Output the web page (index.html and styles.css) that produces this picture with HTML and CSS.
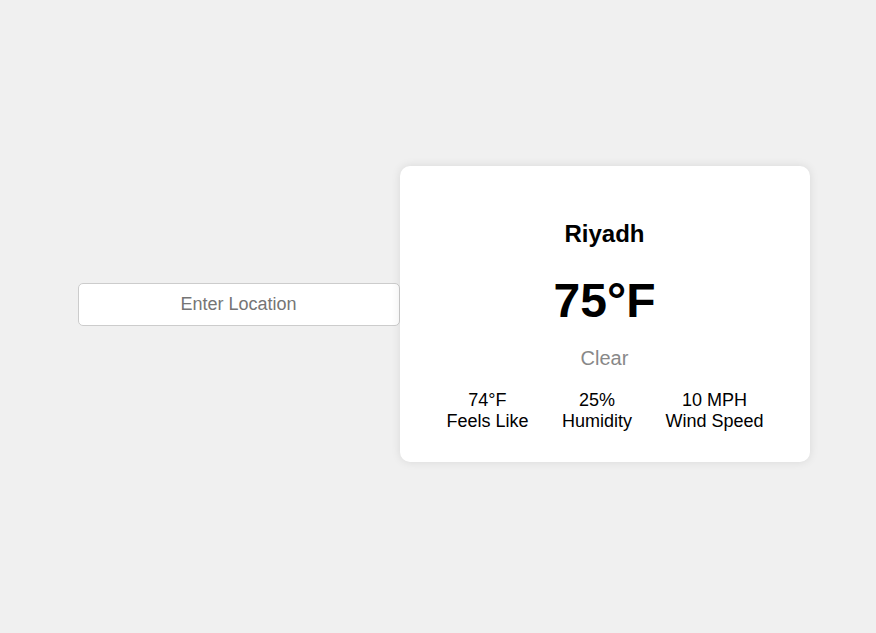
FILE: index.html
```html
<!DOCTYPE html>
<html lang="en">
<head>
<meta charset="utf-8">
<title>Weather</title>
<link rel="stylesheet" href="styles.css">
</head>
<body>
<div class="page">
  <div class="search">
    <input class="location" type="text" placeholder="Enter Location">
  </div>
  <div class="card">
    <h2 class="city">Riyadh</h2>
    <div class="temp">75°F</div>
    <div class="desc">Clear</div>
    <div class="details">
      <div class="item"><div>74°F</div><div>Feels Like</div></div>
      <div class="item"><div>25%</div><div>Humidity</div></div>
      <div class="item"><div>10 MPH</div><div>Wind Speed</div></div>
    </div>
  </div>
</div>
</body>
</html>
```
FILE: styles.css
```css
* { box-sizing: border-box; }
html, body { margin: 0; padding: 0; }
body {
  background: #f0f0f0;
  font-family: "Liberation Sans", Arial, sans-serif;
  color: #000;
}
.page {
  height: 627px;
  padding-left: 11px;
  display: flex;
  justify-content: center;
  align-items: center;
}
.search {
  margin-bottom: 19px;
}
.location {
  display: block;
  width: 322px;
  height: 43px;
  padding: 10px;
  font-family: "Liberation Sans", Arial, sans-serif;
  font-size: 18px;
  text-align: center;
  background: #fff;
  border: 1px solid #ccc;
  border-radius: 5px;
  outline: none;
}
.location::placeholder { color: #757575; }
.card {
  width: 410px;
  height: 296px;
  background: #fff;
  border-radius: 10px;
  box-shadow: 0 0 10px rgba(0, 0, 0, 0.1);
  padding: 54px 20px 30px;
  text-align: center;
}
.city {
  margin: 0;
  font-size: 24px;
  font-weight: bold;
}
.temp {
  margin-top: 25px;
  font-size: 48px;
  font-weight: bold;
}
.desc {
  margin-top: 19px;
  font-size: 20px;
  color: #888;
}
.details {
  margin-top: 20px;
  padding-left: 1px;
  display: flex;
  justify-content: center;
  gap: 33.5px;
  font-size: 18px;
}
```
